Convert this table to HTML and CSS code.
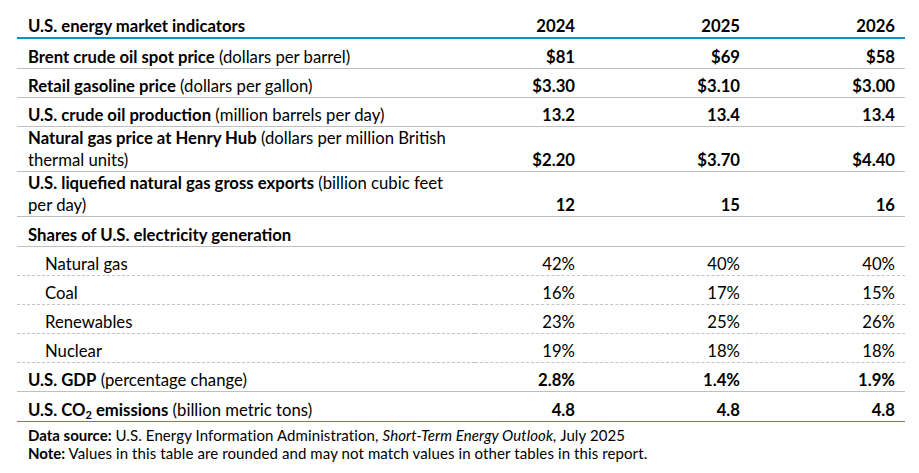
FILE: index.html
```html
<!DOCTYPE html>
<html lang="en">
<head>
<meta charset="utf-8">
<title>U.S. energy market indicators</title>
<link rel="stylesheet" href="styles.css">
</head>
<body>
<div class="wrap">
  <table class="ind">
    <colgroup>
      <col class="c-label">
      <col class="c-first">
      <col class="c-val">
      <col class="c-last">
    </colgroup>
    <thead>
      <tr>
        <th class="label">U.S. energy market indicators</th>
        <th class="num">2024</th>
        <th class="num">2025</th>
        <th class="num">2026</th>
      </tr>
    </thead>
    <tbody>
      <tr class="tall">
        <td class="label"><b>Brent crude oil spot price</b> (dollars per barrel)</td>
        <td class="num b">$81</td><td class="num b">$69</td><td class="num b">$58</td>
      </tr>
      <tr>
        <td class="label"><b>Retail gasoline price</b> (dollars per gallon)</td>
        <td class="num b">$3.30</td><td class="num b">$3.10</td><td class="num b">$3.00</td>
      </tr>
      <tr>
        <td class="label"><b>U.S. crude oil production</b> (million barrels per day)</td>
        <td class="num b">13.2</td><td class="num b">13.4</td><td class="num b">13.4</td>
      </tr>
      <tr class="two">
        <td class="label"><b>Natural gas price at Henry Hub</b> (dollars per million British thermal units)</td>
        <td class="num b">$2.20</td><td class="num b">$3.70</td><td class="num b">$4.40</td>
      </tr>
      <tr class="two">
        <td class="label"><b>U.S. liquefied natural gas gross exports</b> (billion cubic feet per day)</td>
        <td class="num b">12</td><td class="num b">15</td><td class="num b">16</td>
      </tr>
      <tr class="tall">
        <td class="label"><b>Shares of U.S. electricity generation</b></td>
        <td></td><td></td><td></td>
      </tr>
      <tr class="sub">
        <td class="label indent">Natural gas</td>
        <td class="num">42%</td><td class="num">40%</td><td class="num">40%</td>
      </tr>
      <tr class="sub">
        <td class="label indent">Coal</td>
        <td class="num">16%</td><td class="num">17%</td><td class="num">15%</td>
      </tr>
      <tr class="sub">
        <td class="label indent">Renewables</td>
        <td class="num">23%</td><td class="num">25%</td><td class="num">26%</td>
      </tr>
      <tr class="sub">
        <td class="label indent">Nuclear</td>
        <td class="num">19%</td><td class="num">18%</td><td class="num">18%</td>
      </tr>
      <tr>
        <td class="label"><b>U.S. GDP</b> (percentage change)</td>
        <td class="num b">2.8%</td><td class="num b">1.4%</td><td class="num b">1.9%</td>
      </tr>
      <tr class="last tall">
        <td class="label"><b>U.S. CO<sub>2</sub> emissions</b> (billion metric tons)</td>
        <td class="num b">4.8</td><td class="num b">4.8</td><td class="num b">4.8</td>
      </tr>
    </tbody>
  </table>
  <div class="notes">
    <p><b>Data source:</b> U.S. Energy Information Administration, <i>Short-Term Energy Outlook,</i> July 2025</p>
    <p><b>Note:</b> Values in this table are rounded and may not match values in other tables in this report.</p>
  </div>
</div>
</body>
</html>
```

FILE: styles.css
```css
html, body {
  margin: 0;
  padding: 0;
  background: #ffffff;
}

body {
  font-family: Lato, "Open Sans", "Liberation Sans", sans-serif;
  color: #000000;
}

.wrap {
  padding: 16px 0 0 17px;
  width: 888px;
}

.ind {
  width: 888px;
  border-collapse: collapse;
  table-layout: fixed;
  font-size: 16.7px;
  line-height: 21px;
}

.c-label { width: 458px; }
.c-first { width: 110px; }
.c-val { width: 165px; }
.c-last { width: 155px; }

.ind th,
.ind td {
  padding: 7px 10px 0 11px;
  vertical-align: bottom;
  border-bottom: 1px solid #bfbfbf;
}

.ind thead th {
  font-weight: 700;
  padding-top: 0;
  padding-bottom: 0;
  border-bottom: 2px solid #0b90cb;
}

.ind .label { text-align: left; }
.ind .num { text-align: right; padding-left: 0; }
.ind .b { font-weight: 700; }
.ind b { font-weight: 700; }

.ind tr.tall td { padding-top: 8px; }
.ind tr.two td {
  padding-top: 0;
  line-height: 22px;
}

.ind tr.sub td { border-bottom: 1px dashed #c4c4c4; }
.ind .indent { padding-left: 28px; }

.ind tr.last td { border-bottom: 1px solid #3a93b6; }

.ind sub {
  font-size: 11px;
  line-height: 0;
  vertical-align: -3px;
}

.notes {
  padding: 4px 0 0 11px;
  font-size: 15px;
  line-height: 18px;
  letter-spacing: 0.1px;
}

.notes b { letter-spacing: 0; }

.notes p { margin: 0; }
```
